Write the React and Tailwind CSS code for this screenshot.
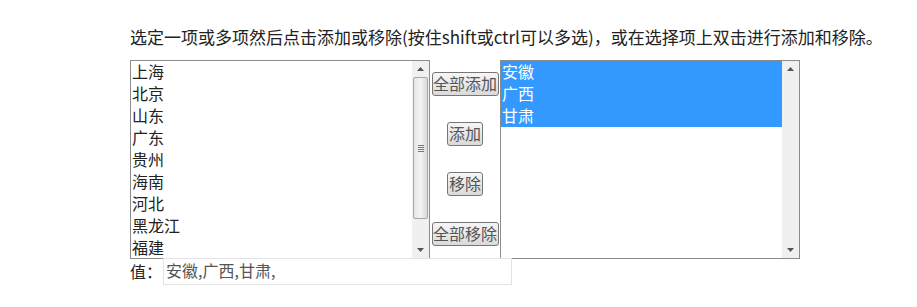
import React from "react";

const F = { fontFamily: '"Noto Sans CJK SC", "Noto Sans", sans-serif' };

function UpArrow() {
  return (
    <svg width="7" height="4" viewBox="0 0 7 4"><path d="M0 4 L3.5 0 L7 4 Z" fill="#555" /></svg>
  );
}
function DownArrow() {
  return (
    <svg width="7" height="4" viewBox="0 0 7 4"><path d="M0 0 L3.5 4 L7 0 Z" fill="#555" /></svg>
  );
}

function Scrollbar({ thumb }) {
  return (
    <div className="w-[17px] h-full bg-[#f0f0f0] flex flex-col shrink-0">
      <div className="h-[16px] flex items-center justify-center"><UpArrow /></div>
      <div className="flex-1 flex flex-col px-[1px]">
        {thumb && (
          <div className="h-[142px] rounded-[2px] border border-[#a8a8a8] bg-gradient-to-r from-[#e4e4e4] via-[#f4f4f4] to-[#d8d8d8] flex items-center justify-center">
            <div className="flex flex-col gap-[1px]">
              <div className="w-[6px] h-[1px] bg-[#777]" />
              <div className="w-[6px] h-[1px] bg-[#777]" />
              <div className="w-[6px] h-[1px] bg-[#777]" />
              <div className="w-[6px] h-[1px] bg-[#777]" />
            </div>
          </div>
        )}
      </div>
      <div className="h-[16px] flex items-center justify-center"><DownArrow /></div>
    </div>
  );
}

function Btn({ children, wide }) {
  return (
    <button
      className={`h-[24px] ${wide ? "w-[67px]" : "w-[36px]"} rounded-[3px] border border-[#767676] bg-gradient-to-b from-[#f6f6f6] to-[#dadada] text-[16px] leading-[18px] pb-[3px] text-[#555] flex items-center justify-center whitespace-nowrap px-0`}
      style={F}
    >
      {children}
    </button>
  );
}

export default function App() {
  const left = ["上海", "北京", "山东", "广东", "贵州", "海南", "河北", "黑龙江", "福建"];
  const right = ["安徽", "广西", "甘肃"];
  return (
    <div className="w-[917px] h-[307px] bg-white pl-[130px] pt-[27px] text-[#222]" style={F}>
      <div className="h-[22px] text-[17px] leading-[19px] mb-[11px] whitespace-nowrap text-[#222]">
        选定一项或多项然后点击添加或移除(按住shift或ctrl可以多选)，或在选择项上双击进行添加和移除。
      </div>
      <div className="flex">
        <div className="w-[300px] h-[199px] border border-[#8c8c8c] flex bg-white">
          <div className="flex-1 flex flex-col text-[16px] leading-[20px] pl-[1px] overflow-hidden">
            {left.map((t) => (
              <div key={t} className="h-[22px] shrink-0">{t}</div>
            ))}
          </div>
          <Scrollbar thumb />
        </div>
        <div className="w-[70px] h-[199px] flex flex-col items-center pt-[12px] gap-[26px]">
          <Btn wide>全部添加</Btn>
          <Btn>添加</Btn>
          <Btn>移除</Btn>
          <Btn wide>全部移除</Btn>
        </div>
        <div className="w-[300px] h-[199px] border border-[#8c8c8c] flex bg-white">
          <div className="flex-1 flex flex-col text-[16px] leading-[20px]">
            {right.map((t) => (
              <div key={t} className="h-[22px] bg-[#3399ff] text-white pl-[1px]">{t}</div>
            ))}
          </div>
          <Scrollbar />
        </div>
      </div>
      <div className="flex items-center h-[27px] -mt-[1px]">
        <span className="text-[16px] leading-[22px] w-[33px] pb-[2px]">值：</span>
        <div className="w-[349px] h-[27px] border border-[#e3e3e3] text-[16px] leading-[22px] pl-[2px] text-[#555]">
          安徽,广西,甘肃,
        </div>
      </div>
    </div>
  );
}
